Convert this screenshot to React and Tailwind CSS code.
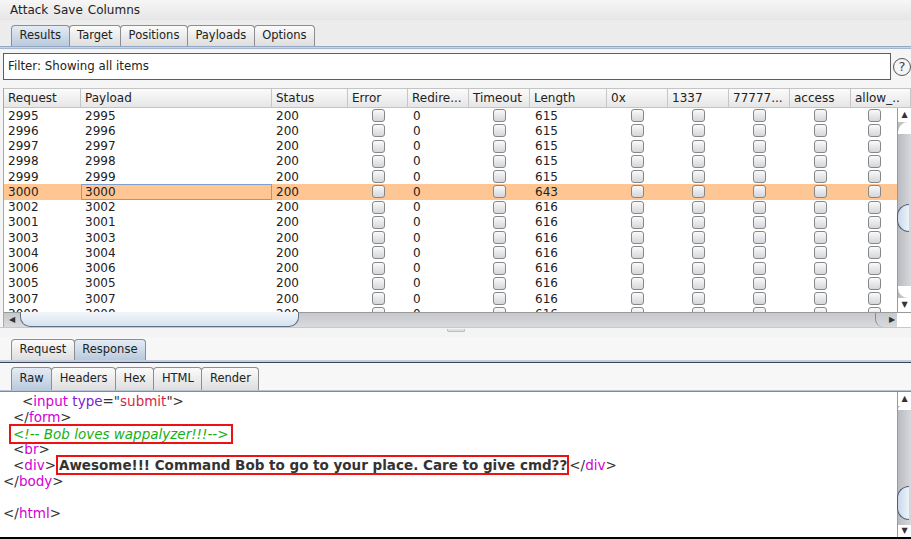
import React from "react";

const cols = [
  ["Request", 77],
  ["Payload", 191],
  ["Status", 76],
  ["Error", 60],
  ["Redire...", 61],
  ["Timeout", 61],
  ["Length", 77],
  ["0x", 61],
  ["1337", 61],
  ["77777...", 61],
  ["access", 61],
  ["allow_..", 60],
];

const rows = [
  [2995, 615],
  [2996, 615],
  [2997, 615],
  [2998, 615],
  [2999, 615],
  [3000, 643],
  [3002, 616],
  [3001, 616],
  [3003, 616],
  [3004, 616],
  [3006, 616],
  [3005, 616],
  [3007, 616],
  [3008, 616],
];

const grid = "grid grid-cols-[77px_191px_76px_60px_61px_61px_77px_61px_61px_61px_61px_46px] grid-rows-[15.25px]";

function Tab({ label, active }) {
  return (
    <div
      className={
        "h-full px-[7.5px] flex items-center text-[11.5px] border border-b-0 border-[#8e8e8e] rounded-t-[4px] -ml-px first:ml-0 " +
        (active
          ? "bg-gradient-to-b from-[#e4ecf5] to-[#b9cadc]"
          : "bg-gradient-to-b from-[#fbfbfb] to-[#dedede]")
      }
    >
      {label}
    </div>
  );
}

function Check() {
  return (
    <div className="w-[13px] h-[13px] rounded-[3px] border border-[#878787] bg-gradient-to-b from-[#fafafa] to-[#d4d6da]" />
  );
}

function Tag({ children }) {
  return <span className="text-[#d400d4]">{children}</span>;
}

export default function App() {
  return (
    <div className="w-[911px] h-[539px] overflow-hidden bg-[#efefef] flex flex-col text-[12px] text-[#222] font-['DejaVu_Sans',sans-serif]">
      {/* menu */}
      <div className="h-[20px] shrink-0 flex items-center gap-[5px] pl-[10px] bg-gradient-to-b from-[#f6f6f6] to-[#e6e6e6]">
        <span>Attack</span>
        <span>Save</span>
        <span>Columns</span>
      </div>

      {/* top tabs */}
      <div className="h-[26px] shrink-0 pt-[5px] pl-[11px] flex bg-[#ececec]">
        <Tab label="Results" active />
        <Tab label="Target" />
        <Tab label="Positions" />
        <Tab label="Payloads" />
        <Tab label="Options" />
      </div>
      <div className="h-[3px] shrink-0 border-t border-[#93a6c2] bg-[#c9d5e4] border-b border-b-[#a7b5c9]" />

      {/* filter */}
      <div className="shrink-0 flex items-center pt-[4px] pl-[3px] bg-[#f5f5f5]">
        <div className="w-[888px] h-[27px] border border-[#5e5e5e] bg-white flex items-center pl-[4px] text-[11.8px]">
          Filter: Showing all items
        </div>
        <div className="ml-[2px] w-[18px] h-[18px] rounded-full border border-[#555] flex items-center justify-center text-[13px] text-[#444]">
          ?
        </div>
      </div>

      {/* table */}
      <div className="shrink-0 pt-[8px] pl-[3px] bg-[#f5f5f5]">
        <div className="border-l border-[#a8a8a8]">
          <div className="grid grid-cols-[77px_191px_76px_60px_61px_61px_77px_61px_61px_61px_61px_60px] h-[20px] bg-gradient-to-b from-[#fbfbfb] to-[#e6e6e6] border-y border-[#c4c4c4]">
            {cols.map(([c]) => (
              <div key={c} className="border-r border-[#c6c6c6] pl-[4px] flex items-center whitespace-nowrap overflow-hidden">
                {c}
              </div>
            ))}
          </div>
          <div className="flex h-[219px]">
            <div className="w-[893px] flex flex-col">
              <div className="h-[204px] overflow-hidden bg-white">
                {rows.map(([n, len]) => {
                  const sel = n === 3000;
                  return (
                    <div key={n} className={grid + " h-[15.25px] leading-[12px] " + (sel ? "bg-[#ffc592]" : "")}>
                      <div className="pl-[4px] flex items-center">{n}</div>
                      <div className={"flex items-center " + (sel ? "border border-[#7f9fcf] pl-[3px]" : "pl-[4px]")}>{n}</div>
                      <div className="pl-[4px] flex items-center">200</div>
                      <div className="flex items-center justify-center"><Check /></div>
                      <div className="pl-[5px] flex items-center">0</div>
                      <div className="flex items-center justify-center"><Check /></div>
                      <div className="pl-[5px] flex items-center">{len}</div>
                      <div className="flex items-center justify-center"><Check /></div>
                      <div className="flex items-center justify-center"><Check /></div>
                      <div className="flex items-center justify-center"><Check /></div>
                      <div className="flex items-center justify-center"><Check /></div>
                      <div className="flex items-center justify-center"><Check /></div>
                    </div>
                  );
                })}
              </div>
              {/* horizontal scrollbar */}
              <div className="h-[15px] flex items-stretch bg-gradient-to-b from-[#c6c8cc] to-[#d8dadd] border-t border-[#9a9a9a]">
                <div className="w-[16px] flex items-center justify-center text-[8px] text-[#333]">◀</div>
                <div className="w-[279px] -mt-px rounded-b-[10px] border border-t-0 border-[#5f7088] bg-gradient-to-b from-[#f2f6fa] to-[#d6e2ee]" />
                <div className="flex-1" />
                <div className="w-[12px] rounded-bl-[8px] border-l border-[#8a8a8a]" />
                <div className="w-[10px] flex items-center justify-center text-[8px] text-[#333]">▶</div>
              </div>
            </div>
            {/* vertical scrollbar */}
            <div className="w-[15px] flex flex-col">
              <div className="h-[204px] flex flex-col bg-gradient-to-r from-[#b9bbc0] to-[#d6d8dc] border-l border-[#9a9a9a]">
                <div className="h-[14px] shrink-0 bg-white flex items-center justify-center text-[8px] text-[#333]">▲</div>
                <div className="h-[12px] shrink-0 rounded-tl-[10px] bg-white" />
                <div className="h-[70px] shrink-0" />
                <div className="h-[28px] shrink-0 w-[12px] ml-[-1px] rounded-l-full border border-r-0 border-[#4e5e78] bg-gradient-to-r from-[#c8d8ea] to-[#eef3f8]" />
                <div className="flex-1" />
                <div className="h-[12px] shrink-0 rounded-bl-[10px] bg-white" />
                <div className="h-[14px] shrink-0 bg-white flex items-center justify-center text-[8px] text-[#333]">▼</div>
              </div>
              <div className="flex-1 bg-white border-t border-[#9a9a9a]" />
            </div>
          </div>
        </div>
      </div>

      {/* split divider */}
      <div className="h-[10px] shrink-0 bg-[#f4f4f4] border-t border-[#c8c8c8] flex justify-center pt-[1px]">
        <div className="w-[18px] h-[3px] rounded-b-[2px] border border-t-0 border-[#bbbbbb] bg-[#e0e0e0]" />
      </div>

      {/* request / response tabs */}
      <div className="h-[23px] shrink-0 pt-[2px] pl-[11px] flex bg-[#f7f7f7]">
        <Tab label="Request" />
        <Tab label="Response" active />
      </div>
      <div className="h-[3px] shrink-0 bg-[#c3cfde] border-b border-[#3c4258]" />

      {/* raw / headers tabs */}
      <div className="h-[27px] shrink-0 pt-[4px] pl-[11px] flex bg-[#f7f7f7]">
        <Tab label="Raw" active />
        <Tab label="Headers" />
        <Tab label="Hex" />
        <Tab label="HTML" />
        <Tab label="Render" />
      </div>
      <div className="h-[2px] shrink-0 bg-[#b6c4d6] border-b border-[#7c8aa2]" />

      {/* response text */}
      <div className="h-[145px] shrink-0 flex bg-white">
        <div className="flex-1 pt-[1px] pl-[3px] text-[13.5px] text-[#333] whitespace-pre">
          <div className="h-[16px] leading-[16px] pl-[19px]">
            {"<"}<Tag>input</Tag> <span className="text-[#7a22d8]">type</span>={'"'}<span className="text-[#d2284a]">submit</span>{'">'}
          </div>
          <div className="h-[16px] leading-[16px] pl-[10px]">
            {"</"}<Tag>form</Tag>{">"}
          </div>
          <div className="h-[16px] leading-[16px] pl-[6px]">
            <span className="inline-block h-[20px] leading-[16px] border-2 border-[#ee1111] pl-[2px] pr-[3px] -mt-[1px] text-[#14b014] italic">
              {"<!-- Bob loves wappalyzer!!!-->"}
            </span>
          </div>
          <div className="h-[16px] leading-[16px] pl-[10px]">
            {"<"}<Tag>br</Tag>{">"}
          </div>
          <div className="h-[16px] leading-[16px] pl-[10px]">
            {"<"}<Tag>div</Tag>{">"}
            <span className="inline-block h-[20px] leading-[16px] border-2 border-[#ee1111] pl-[1px] -mt-[2px] align-top font-bold text-[#333]">
              Awesome!!! Command Bob to go to your place. Care to give cmd??
            </span>
            {"</"}<Tag>div</Tag>{">"}
          </div>
          <div className="h-[16px] leading-[16px]">
            {"</"}<Tag>body</Tag>{">"}
          </div>
          <div className="h-[16px]" />
          <div className="h-[16px] leading-[16px]">
            {"</"}<Tag>html</Tag>{">"}
          </div>
        </div>
        <div className="w-[14px] flex flex-col bg-gradient-to-r from-[#b9bbc0] to-[#d6d8dc] border-l border-[#9a9a9a]">
          <div className="h-[14px] shrink-0 bg-white flex items-center justify-center text-[8px] text-[#333]">▲</div>
          <div className="h-[4px] shrink-0 rounded-tl-[10px] bg-white" />
          <div className="h-[76px] shrink-0" />
          <div className="h-[34px] shrink-0 w-[12px] ml-[-1px] rounded-l-full border border-r-0 border-[#4e5e78] bg-gradient-to-r from-[#c8d8ea] to-[#eef3f8]" />
          <div className="flex-1" />
          <div className="h-[12px] shrink-0 bg-white flex items-center justify-center text-[8px] text-[#333]">▼</div>
        </div>
      </div>
      <div className="flex-1 bg-black" />
    </div>
  );
}
